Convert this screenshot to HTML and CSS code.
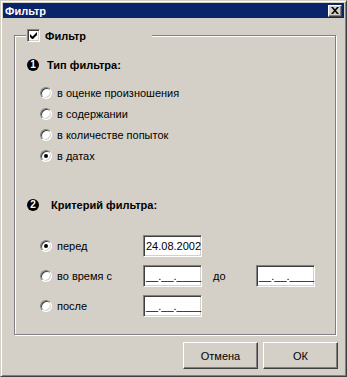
FILE: index.html
```html
<!DOCTYPE html>
<html lang="ru">
<head>
    <meta charset="UTF-8">
    <title>Фильтр</title>
    <link rel="stylesheet" href="styles.css">
</head>
<body>

<div class="window">
    <!-- Заголовок окна -->
    <div class="titlebar">
        <span class="title">Фильтр</span>
        <button class="close-btn" aria-label="Закрыть">
            <svg width="8" height="7" viewBox="0 0 8 7">
                <path d="M0 0h2l2 2.2L6 0h2L5 3.5 8 7H6L4 4.8 2 7H0l3-3.5z" fill="#000"/>
            </svg>
        </button>
    </div>

    <div class="dialog-body">
        <fieldset class="group">
            <legend class="group-legend">
                <span class="checkbox checked">
                    <svg width="7" height="7" viewBox="0 0 7 7">
                        <path d="M0 2v3l2 2h1l4-4V0L2.5 4.5z" fill="#000"/>
                    </svg>
                </span>
                <span>Фильтр</span>
            </legend>

            <!-- Тип фильтра -->
            <div class="step">
                <span class="step-num">1</span>
                <span class="step-title">Тип фильтра:</span>
            </div>
            <div class="radio-list">
                <label class="radio-row"><span class="radio"></span>в оценке произношения</label>
                <label class="radio-row"><span class="radio"></span>в содержании</label>
                <label class="radio-row"><span class="radio"></span>в количестве попыток</label>
                <label class="radio-row"><span class="radio selected"></span>в датах</label>
            </div>

            <!-- Критерий фильтра -->
            <div class="step step-second">
                <span class="step-num">2</span>
                <span class="step-title">Критерий фильтра:</span>
            </div>
            <div class="criteria">
                <div class="crit-row">
                    <label class="crit-label"><span class="radio selected"></span>перед</label>
                    <span class="edit">24.08.2002</span>
                </div>
                <div class="crit-row">
                    <label class="crit-label"><span class="radio"></span>во время с</label>
                    <span class="edit">__.__.____</span>
                    <span class="to-label">до</span>
                    <span class="edit">__.__.____</span>
                </div>
                <div class="crit-row">
                    <label class="crit-label"><span class="radio"></span>после</label>
                    <span class="edit">__.__.____</span>
                </div>
            </div>
        </fieldset>

        <div class="buttons">
            <button class="btn">Отмена</button>
            <button class="btn">ОК</button>
        </div>
    </div>
</div>

</body>
</html>
```

FILE: styles.css
```css
body {
    margin: 0;
    padding: 0;
    font-family: "Liberation Sans", Arial, sans-serif;
    font-size: 11px;
    color: #000;
    background-color: #d4d0c8;
}
.window {
    width: 347px;
    height: 377px;
    box-sizing: border-box;
    padding: 2px;
    background-color: #d4d0c8;
    border: 1px solid;
    border-color: #d4d0c8 #404040 #404040 #d4d0c8;
    box-shadow: inset 1px 1px 0 #fff, inset -1px -1px 0 #808080;
}
.titlebar {
    height: 15px;
    background-color: #0a246a;
    display: flex;
    align-items: center;
    justify-content: space-between;
    padding: 0 2px 0 2px;
}
.title {
    color: #fff;
    font-weight: bold;
    font-size: 11px;
}
.close-btn {
    width: 14px;
    height: 12px;
    padding: 0;
    background-color: #d4d0c8;
    border: 1px solid;
    border-color: #fff #404040 #404040 #fff;
    box-shadow: inset -1px -1px 0 #808080;
    display: flex;
    align-items: center;
    justify-content: center;
}
.dialog-body {
    padding: 0 6px 0 11px;
}
.group {
    margin: 11px 2px 0 0;
    padding: 0;
    height: 306px;
    box-sizing: border-box;
    border: 1px solid #808080;
    box-shadow: 1px 1px 0 #fff, inset 1px 1px 0 #fff;
}
.group-legend {
    margin-left: 11px;
    padding: 0 0 0 1px;
    width: 126px;
    height: 13px;
    box-sizing: border-box;
    display: flex;
    align-items: center;
    gap: 5px;
    font-weight: bold;
    background-color: #d4d0c8;
}
.checkbox {
    width: 13px;
    height: 13px;
    box-sizing: border-box;
    background-color: #fff;
    border: 1px solid;
    border-color: #808080 #fff #fff #808080;
    box-shadow: inset 1px 1px 0 #404040, inset -1px -1px 0 #d4d0c8;
    display: flex;
    align-items: center;
    justify-content: center;
}
.step {
    display: flex;
    align-items: center;
    height: 14px;
    margin: 16px 0 0 12px;
    gap: 8px;
    font-weight: bold;
}
.step-second {
    margin-top: 32px;
    gap: 12px;
}
.step-num {
    width: 12px;
    height: 12px;
    border-radius: 50%;
    background-color: #000;
    color: #fff;
    font-size: 10px;
    line-height: 12px;
    text-align: center;
}
.radio-list {
    margin: 10px 0 0 25px;
}
.radio-row {
    display: flex;
    align-items: center;
    height: 21px;
    gap: 5px;
}
.radio {
    width: 12px;
    height: 12px;
    box-sizing: border-box;
    border-radius: 50%;
    background-color: #fff;
    border: 1px solid;
    border-color: #808080 #fff #fff #808080;
    box-shadow: inset 1px 1px 0 #404040, inset -1px -1px 0 #d4d0c8;
    display: flex;
    align-items: center;
    justify-content: center;
}
.radio.selected::after {
    content: "";
    width: 4px;
    height: 4px;
    border-radius: 50%;
    background-color: #000;
}
.criteria {
    margin: 19px 0 0 25px;
}
.crit-row {
    display: flex;
    align-items: center;
    height: 30px;
}
.crit-label {
    display: flex;
    align-items: center;
    gap: 5px;
    width: 103px;
}
.edit {
    width: 59px;
    height: 22px;
    box-sizing: border-box;
    background-color: #fff;
    border: 1px solid;
    border-color: #808080 #fff #fff #808080;
    box-shadow: inset 1px 1px 0 #404040, inset -1px -1px 0 #d4d0c8;
    padding: 0 0 0 2px;
    line-height: 20px;
    font-size: 11px;
    white-space: nowrap;
}
.to-label {
    width: 54px;
    box-sizing: border-box;
    padding-left: 11px;
}
.buttons {
    display: flex;
    justify-content: flex-end;
    gap: 5px;
    margin-top: 7px;
}
.btn {
    width: 75px;
    height: 27px;
    font-family: "Liberation Sans", Arial, sans-serif;
    font-size: 11px;
    color: #000;
    background-color: #d4d0c8;
    border: 1px solid;
    border-color: #fff #404040 #404040 #fff;
    box-shadow: inset -1px -1px 0 #808080;
    padding: 0;
}
```
